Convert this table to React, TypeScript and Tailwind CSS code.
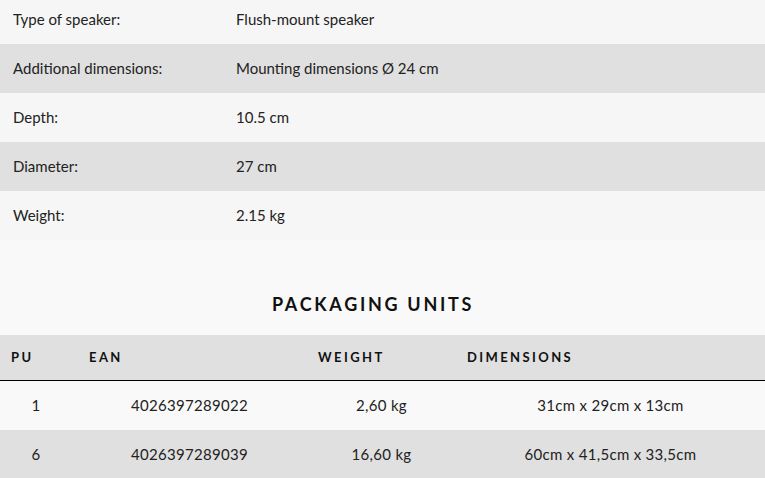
import React from "react";

const specs: [string, string][] = [
  ["Type of speaker:", "Flush-mount speaker"],
  ["Additional dimensions:", "Mounting dimensions Ø 24 cm"],
  ["Depth:", "10.5 cm"],
  ["Diameter:", "27 cm"],
  ["Weight:", "2.15 kg"],
];

const pu = [
  ["1", "4026397289022", "2,60 kg", "31cm x 29cm x 13cm"],
  ["6", "4026397289039", "16,60 kg", "60cm x 41,5cm x 33,5cm"],
];

export default function App() {
  return (
    <div className="w-[765px] h-[478px] overflow-hidden bg-[#f9f9f9] text-[#222]" style={{ fontFamily: "Lato, 'Noto Sans', sans-serif" }}>
      <div className="-mt-[5px]">
        {specs.map(([k, v], i) => (
          <div key={k} className={`flex items-center h-[49px] text-[15px] ${i % 2 ? "bg-[#e0e0e0]" : "bg-[#f6f6f6]"}`}>
            <div className="w-[236px] pl-[13px]">{k}</div>
            <div>{v}</div>
          </div>
        ))}
      </div>
      <div className="h-[95px] flex items-end justify-center pb-[22px] pr-[19px]">
        <h2 className="text-[18px] font-bold tracking-[2.7px] text-[#111] leading-none">PACKAGING UNITS</h2>
      </div>
      <div className="flex items-center h-[46px] bg-[#e0e0e0] border-b border-black text-[13px] font-bold tracking-[2.4px] text-[#111]">
        <div className="w-[78px] pl-[11px]">PU</div>
        <div className="w-[229px] pl-[11px]">EAN</div>
        <div className="w-[149px] pl-[11px]">WEIGHT</div>
        <div className="w-[309px] pl-[11px]">DIMENSIONS</div>
      </div>
      {pu.map((r, i) => (
        <div key={i} className={`flex items-center h-[49px] text-[15px] tracking-[0.3px] ${i % 2 ? "bg-[#e0e0e0]" : "bg-[#f9f9f9]"}`}>
          <div className="w-[72px] text-center">{r[0]}</div>
          <div className="w-[235px] text-center">{r[1]}</div>
          <div className="w-[149px] text-center">{r[2]}</div>
          <div className="w-[309px] text-center">{r[3]}</div>
        </div>
      ))}
    </div>
  );
}
